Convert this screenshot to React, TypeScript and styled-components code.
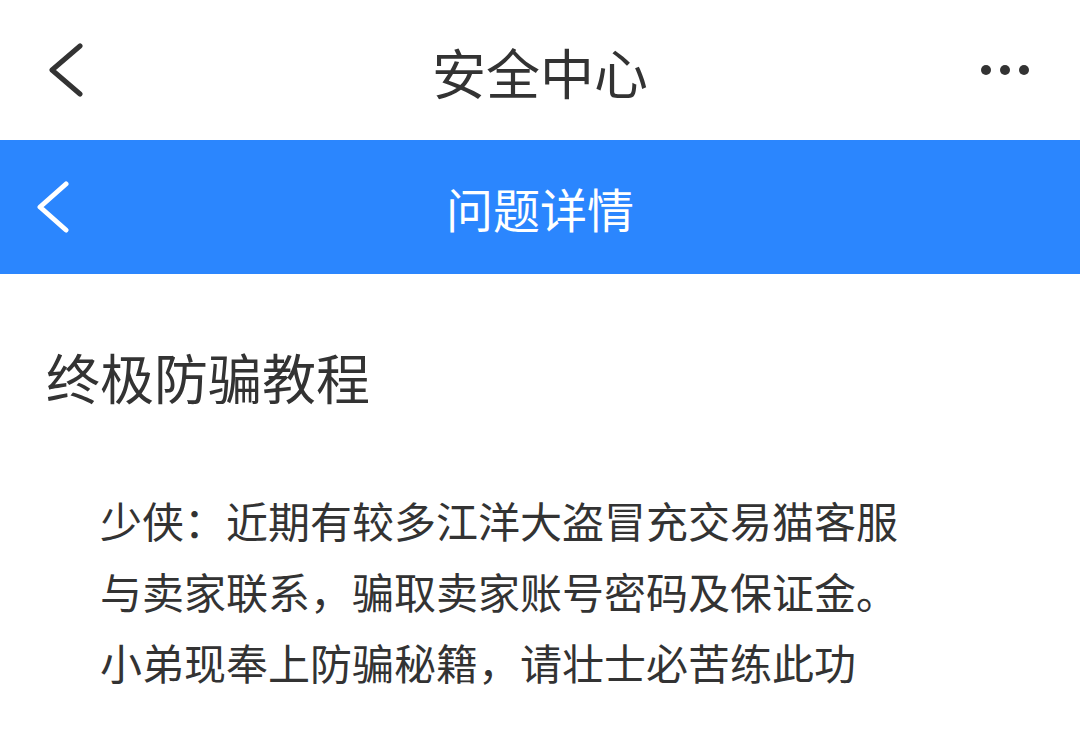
import React from "react";
import styled, { createGlobalStyle } from "styled-components";

const GlobalStyle = createGlobalStyle`
  html, body {
    margin: 0;
    padding: 0;
    background: #ffffff;
    font-family: "Noto Sans CJK SC", "Noto Sans", sans-serif;
  }
`;

const Page = styled.div`
  width: 1080px;
  height: 738px;
  overflow: hidden;
  background: #ffffff;
  display: flex;
  flex-direction: column;
`;

const TopBar = styled.div`
  height: 140px;
  display: grid;
  grid-template-columns: 160px 1fr 160px;
  align-items: center;
  background: #ffffff;
`;

const SubBar = styled.div`
  height: 134px;
  display: grid;
  grid-template-columns: 160px 1fr 160px;
  align-items: center;
  background: #2b86fe;
`;

const IconSlot = styled.div<{ $align: "start" | "end"; $pad: number }>`
  display: flex;
  justify-content: ${(p) => (p.$align === "start" ? "flex-start" : "flex-end")};
  padding-left: ${(p) => (p.$align === "start" ? p.$pad : 0)}px;
  padding-right: ${(p) => (p.$align === "end" ? p.$pad : 0)}px;
  align-items: center;
`;

const BarTitle = styled.div<{ $color: string; $size: number; $shift: number }>`
  text-align: center;
  color: ${(p) => p.$color};
  font-size: ${(p) => p.$size}px;
  line-height: 1;
  padding-top: ${(p) => p.$shift}px;
`;

const Content = styled.div`
  padding: 76px 40px 0 46px;
`;

const Heading = styled.h1`
  margin: 0;
  font-size: 54px;
  font-weight: 400;
  color: #333333;
  line-height: 1;
`;

const Body = styled.p`
  margin: 80px 0 0 54px;
  width: 820px;
  font-size: 42px;
  line-height: 71px;
  color: #333333;
`;

const Chevron = ({ color, w, h }: { color: string; w: number; h: number }) => (
  <svg width={w} height={h} viewBox={`0 0 ${w} ${h}`} fill="none">
    <path
      d={`M${w - 3} 3 L3 ${h / 2} L${w - 3} ${h - 3}`}
      stroke={color}
      strokeWidth={5}
      strokeLinecap="round"
      strokeLinejoin="round"
    />
  </svg>
);

const Dots = () => (
  <svg width="50" height="12" viewBox="0 0 50 12">
    <circle cx="6" cy="6" r="5" fill="#333" />
    <circle cx="25" cy="6" r="5" fill="#333" />
    <circle cx="44" cy="6" r="5" fill="#333" />
  </svg>
);

const App = () => {
  return (
    <Page>
      <GlobalStyle />
      <TopBar>
        <IconSlot $align="start" $pad={49}>
          <Chevron color="#333333" w={34} h={54} />
        </IconSlot>
        <BarTitle $color="#333333" $size={54} $shift={4}>
          安全中心
        </BarTitle>
        <IconSlot $align="end" $pad={50}>
          <Dots />
        </IconSlot>
      </TopBar>
      <SubBar>
        <IconSlot $align="start" $pad={37}>
          <Chevron color="#ffffff" w={32} h={52} />
        </IconSlot>
        <BarTitle $color="#ffffff" $size={47} $shift={0}>
          问题详情
        </BarTitle>
        <div />
      </SubBar>
      <Content>
        <Heading>终极防骗教程</Heading>
        <Body>
          少侠：近期有较多江洋大盗冒充交易猫客服与卖家联系，骗取卖家账号密码及保证金。小弟现奉上防骗秘籍，请壮士必苦练此功
        </Body>
      </Content>
    </Page>
  );
};

export default App;
